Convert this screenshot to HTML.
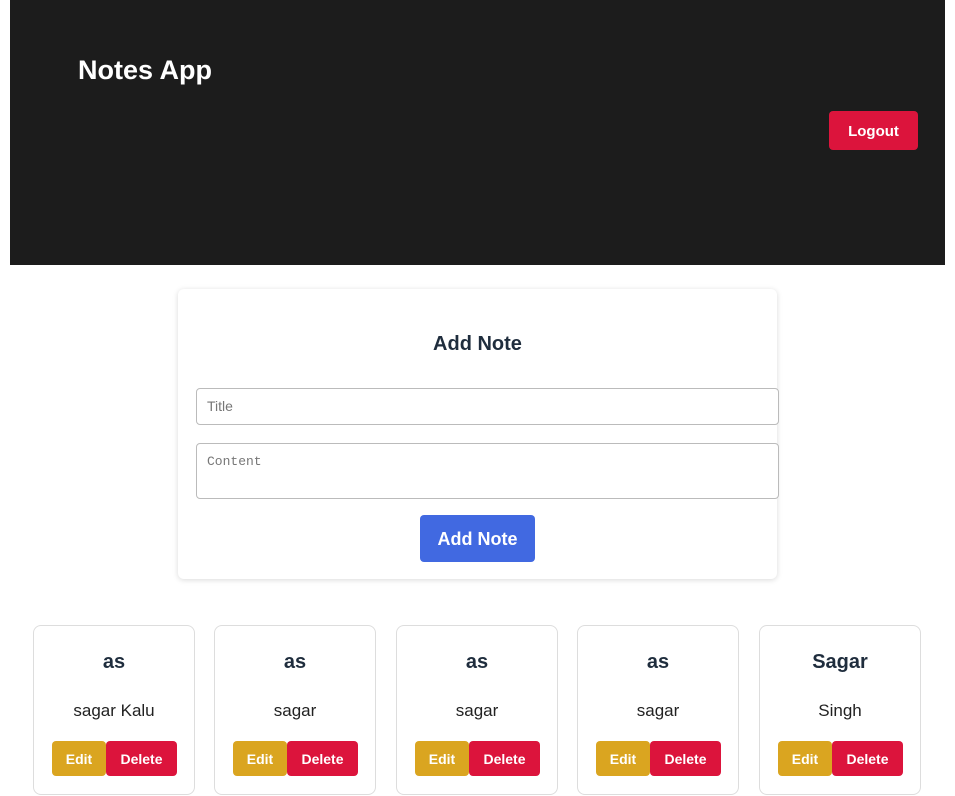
<!DOCTYPE html>
<html><head><style>
*{box-sizing:border-box;margin:0;padding:0}
body{width:955px;height:796px;background:#fff;font-family:"Liberation Sans",sans-serif;position:relative;overflow:hidden}
.hdr{position:absolute;left:10px;top:0;width:935px;height:265px;background:#1c1c1c}
.hdr h1{position:absolute;left:68px;top:55px;color:#fff;font-size:27px;font-weight:bold}
.logout{position:absolute;left:819px;top:111px;width:89px;height:39px;background:#dc143c;color:#fff;border-radius:4px;font-weight:bold;font-size:15px;text-align:center;line-height:41px}
.form{position:absolute;left:178px;top:289px;width:599px;height:290px;border-radius:6px;box-shadow:0 1px 6px rgba(0,0,0,.15);background:#fff}
.t{position:absolute;text-align:center;color:#1f2d3d;font-weight:bold}
.inp{position:absolute;border:1px solid #bbb;border-radius:4px;background:#fff;color:#777;font-size:14px;padding-left:10px}
.add{position:absolute;left:420px;top:515px;width:115px;height:47px;background:#4169e1;color:#fff;border-radius:4px;font-weight:bold;font-size:18px;text-align:center;line-height:49px}
.card{position:absolute;top:625px;width:162px;height:170px;border:1px solid #ddd;border-radius:8px;background:#fff}
.card .h{position:absolute;left:0;right:0;top:25px;text-align:center;font-weight:bold;font-size:20px;color:#1f2d3d}
.card .c{position:absolute;left:0;right:0;top:75px;text-align:center;font-size:17px;color:#222}
.card .e{position:absolute;left:18px;top:115px;width:54px;height:35px;background:#daa520;color:#fff;border-radius:4px;font-weight:bold;font-size:14px;text-align:center;line-height:37px}
.card .d{position:absolute;left:72px;top:115px;width:71px;height:35px;background:#dc143c;color:#fff;border-radius:4px;font-weight:bold;font-size:14px;text-align:center;line-height:37px}
</style></head><body>
<div class="hdr"><h1>Notes App</h1><div class="logout">Logout</div></div>
<div class="form"></div>
<div class="t" style="left:178px;width:599px;top:333px;font-size:20px">Add Note</div>
<div class="inp" style="left:196px;top:388px;width:583px;height:37px;line-height:35px">Title</div>
<div class="inp" style="left:196px;top:443px;width:583px;height:56px;padding-top:10px;font-family:'Liberation Mono',monospace;font-size:13px">Content</div>
<div class="add">Add Note</div>
<div class="card" style="left:33px"><div class="h">as</div><div class="c">sagar Kalu</div><div class="e">Edit</div><div class="d">Delete</div></div>
<div class="card" style="left:214px"><div class="h">as</div><div class="c">sagar</div><div class="e">Edit</div><div class="d">Delete</div></div>
<div class="card" style="left:396px"><div class="h">as</div><div class="c">sagar</div><div class="e">Edit</div><div class="d">Delete</div></div>
<div class="card" style="left:577px"><div class="h">as</div><div class="c">sagar</div><div class="e">Edit</div><div class="d">Delete</div></div>
<div class="card" style="left:759px"><div class="h">Sagar</div><div class="c">Singh</div><div class="e">Edit</div><div class="d">Delete</div></div>
</body></html>
